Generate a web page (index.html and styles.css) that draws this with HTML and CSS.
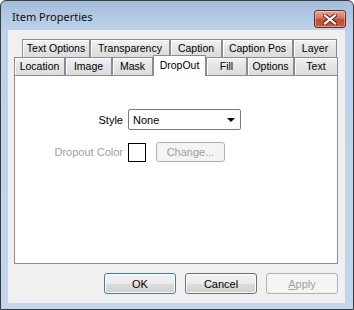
FILE: index.html
```html
<!DOCTYPE html>
<html lang="en">
<head>
    <meta charset="UTF-8">
    <title>Item Properties</title>
    <link rel="stylesheet" href="styles.css">
</head>
<body>
    <div class="window">
        <div class="titlebar">
            <span class="title">Item Properties</span>
            <div class="close-btn">
                <svg width="14" height="11" viewBox="0 0 14 11">
                    <path d="M2 1.5 L12 9.5 M12 1.5 L2 9.5" stroke="#5a1a14" stroke-width="4" stroke-linecap="square"/>
                    <path d="M2 1.5 L12 9.5 M12 1.5 L2 9.5" stroke="#fff" stroke-width="2.2" stroke-linecap="square"/>
                </svg>
            </div>
        </div>

        <div class="client">
            <div class="tabs">
                <div class="tab-row row-back">
                    <div class="tab" style="width:68px">Text Options</div>
                    <div class="tab" style="width:80px">Transparency</div>
                    <div class="tab" style="width:52px">Caption</div>
                    <div class="tab" style="width:71px">Caption Pos</div>
                    <div class="tab" style="width:44px">Layer</div>
                </div>
                <div class="tab-row row-front">
                    <div class="tab" style="width:51px">Location</div>
                    <div class="tab" style="width:47px">Image</div>
                    <div class="tab" style="width:41px">Mask</div>
                    <div class="tab selected" style="width:53px">DropOut</div>
                    <div class="tab" style="width:41px">Fill</div>
                    <div class="tab" style="width:47px">Options</div>
                    <div class="tab" style="width:44px">Text</div>
                </div>
            </div>

            <div class="panel">
                <div class="form">
                    <label class="lbl">Style</label>
                    <div class="select">
                        <span>None</span>
                        <span class="arrow"></span>
                    </div>

                    <label class="lbl disabled">Dropout Color</label>
                    <div class="color-row">
                        <div class="swatch"></div>
                        <button class="btn change" disabled>Change...</button>
                    </div>
                </div>
            </div>

            <div class="buttons">
                <button class="btn default">OK</button>
                <button class="btn">Cancel</button>
                <button class="btn" disabled><u>A</u>pply</button>
            </div>
        </div>
    </div>
</body>
</html>
```

FILE: styles.css
```css
body {
    margin: 0;
    font-family: "Liberation Sans", Arial, sans-serif;
    font-size: 11px;
    color: #000;
    background: #fff;
}
.window {
    width: 354px;
    height: 310px;
    box-sizing: border-box;
    border: 1px solid #3b3b3b;
    border-radius: 6px 6px 0 0;
    background: linear-gradient(#a4bddb, #bcd2ea 28px, #c2d7ed);
    padding: 0 8px 6px 7px;
    display: flex;
    flex-direction: column;
}
.titlebar {
    height: 29px;
    display: flex;
    justify-content: space-between;
    align-items: flex-start;
}
.title {
    font-family: "Noto Sans", sans-serif;
    font-size: 11px;
    margin: 8px 0 0 4px;
    color: #111;
}
.close-btn {
    width: 30px;
    height: 16px;
    margin: 9px -1px 0 0;
    border: 1px solid #6b2a22;
    border-radius: 3px;
    background: linear-gradient(#e9a593, #d2745f 45%, #c04a34 55%, #c8603f);
    display: flex;
    align-items: center;
    justify-content: center;
    box-shadow: inset 0 0 0 1px rgba(255, 255, 255, 0.35);
}
.client {
    flex: 1;
    background: #f0f0f0;
    padding: 9px 7px 0 6px;
}
.tab-row {
    display: flex;
    height: 18px;
}
.row-back {
    padding-left: 8px;
}
.tab {
    box-sizing: border-box;
    border: 1px solid #898c95;
    border-bottom: none;
    background: linear-gradient(#f3f3f3, #e4e4e4 50%, #dcdcdc);
    text-align: center;
    font-size: 10.5px;
    line-height: 17px;
    white-space: nowrap;
    box-shadow: inset 1px 1px 0 #fff;
}
.tab.selected {
    background: #fff;
    box-shadow: none;
    margin-top: -2px;
    height: 21px;
    line-height: 19px;
    position: relative;
    z-index: 1;
}
.panel {
    height: 189px;
    box-sizing: border-box;
    border: 1px solid #898c95;
    background: #fff;
    width: 324px;
}
.form {
    display: grid;
    grid-template-columns: 108px auto;
    column-gap: 5px;
    row-gap: 12px;
    padding-top: 33px;
    align-items: center;
}
.lbl {
    text-align: right;
}
.lbl.disabled {
    color: #a0a0a0;
}
.select {
    width: 113px;
    height: 21px;
    box-sizing: border-box;
    border: 1px solid #7a7a7a;
    border-radius: 2px;
    display: flex;
    align-items: center;
    justify-content: space-between;
    padding: 0 5px 0 4px;
    background: #fff;
}
.arrow {
    width: 0;
    height: 0;
    border-left: 4px solid transparent;
    border-right: 4px solid transparent;
    border-top: 4px solid #000;
}
.color-row {
    display: flex;
    align-items: center;
}
.swatch {
    width: 18px;
    height: 19px;
    box-sizing: border-box;
    border: 1px solid #000;
    background: #fff;
}
.btn {
    font-family: "Liberation Sans", Arial, sans-serif;
    font-size: 11px;
    width: 72px;
    height: 21px;
    box-sizing: border-box;
    border: 1px solid #707070;
    border-radius: 3px;
    background: linear-gradient(#f2f2f2, #ebebeb 50%, #dddddd 51%, #cfcfcf);
    box-shadow: inset 0 0 0 1px #fcfcfc;
    color: #000;
    padding: 0;
}
.btn.default {
    border-color: #3c7fb1;
}
.btn:disabled {
    border-color: #adb2b5;
    background: #f4f4f4;
    color: #a0a0a0;
    box-shadow: none;
}
.btn.change {
    width: 69px;
    height: 20px;
    margin-left: 10px;
}
.buttons {
    display: flex;
    justify-content: flex-end;
    gap: 9px;
    width: 324px;
    margin-top: 9px;
}
```
